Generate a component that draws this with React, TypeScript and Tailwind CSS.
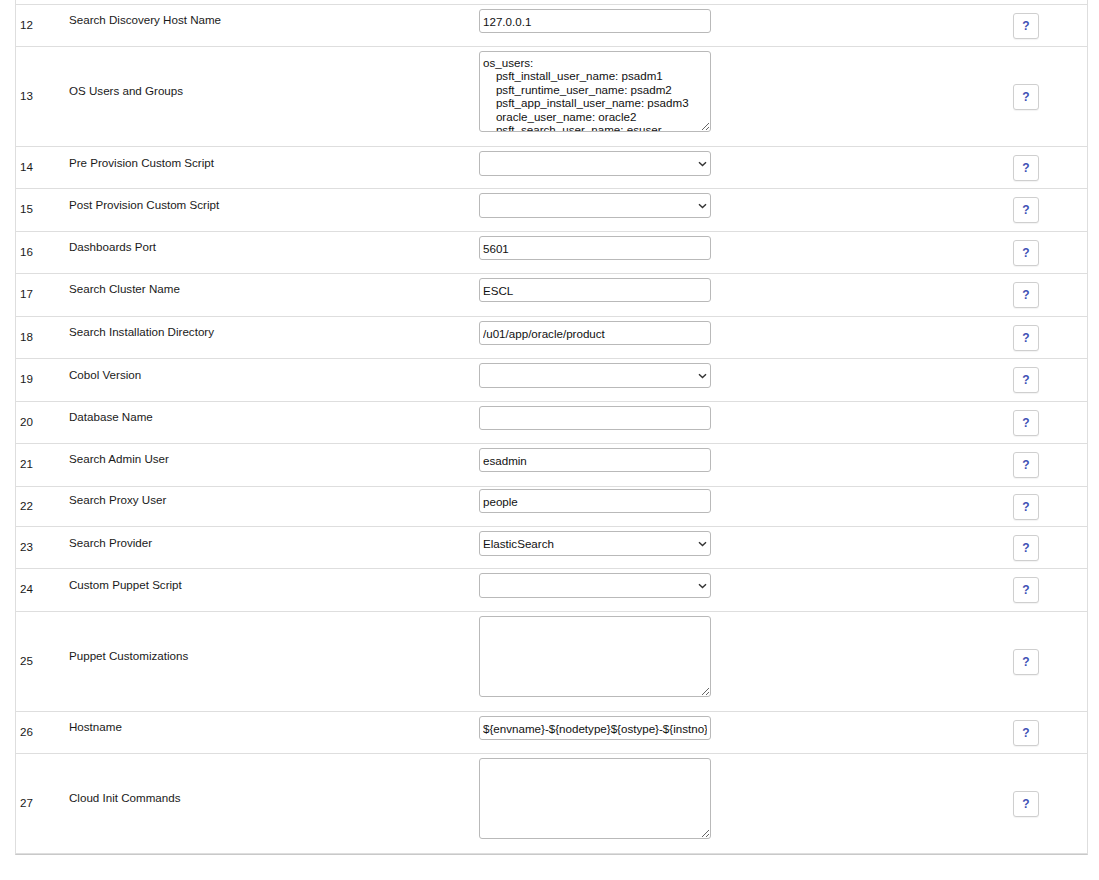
import { ChangeEvent, useState } from 'react';

type Field = {
  no: number;
  label: string;
  kind: 'text' | 'select' | 'area';
  value?: string;
  options?: string[];
  h: number;
  pt?: number;
};

const OS_USERS = `os_users:
    psft_install_user_name: psadm1
    psft_runtime_user_name: psadm2
    psft_app_install_user_name: psadm3
    oracle_user_name: oracle2
    psft_search_user_name: esuser
os_groups:
    psft_common_group_name: oinstall
    psft_runtime_group_name: psft
    psft_app_install_group_name: appinst
    oracle_install_group_name: oinstall2
    oracle_runtime_group_name: dba`;

const FIELDS: Field[] = [
  { no: 12, label: 'Search Discovery Host Name', kind: 'text', value: '127.0.0.1', h: 42 },
  { no: 13, label: 'OS Users and Groups', kind: 'area', value: OS_USERS, h: 100 },
  { no: 14, label: 'Pre Provision Custom Script', kind: 'select', value: '', options: [''], h: 42 },
  { no: 15, label: 'Post Provision Custom Script', kind: 'select', value: '', options: [''], h: 43 },
  { no: 16, label: 'Dashboards Port', kind: 'text', value: '5601', h: 42 },
  { no: 17, label: 'Search Cluster Name', kind: 'text', value: 'ESCL', h: 43 },
  { no: 18, label: 'Search Installation Directory', kind: 'text', value: '/u01/app/oracle/product', h: 42 },
  { no: 19, label: 'Cobol Version', kind: 'select', value: '', options: [''], h: 43 },
  { no: 20, label: 'Database Name', kind: 'text', value: '', h: 42 },
  { no: 21, label: 'Search Admin User', kind: 'text', value: 'esadmin', h: 43 },
  { no: 22, label: 'Search Proxy User', kind: 'text', value: 'people', h: 40, pt: 2 },
  { no: 23, label: 'Search Provider', kind: 'select', value: 'ElasticSearch', options: ['ElasticSearch', 'OpenSearch'], h: 42 },
  { no: 24, label: 'Custom Puppet Script', kind: 'select', value: '', options: [''], h: 43 },
  { no: 25, label: 'Puppet Customizations', kind: 'area', value: '', h: 100 },
  { no: 26, label: 'Hostname', kind: 'text', value: '${envname}-${nodetype}${ostype}-${instno}', h: 42 },
  { no: 27, label: 'Cloud Init Commands', kind: 'area', value: '', h: 100 },
];

const font = "font-['Liberation_Sans','Helvetica','Arial',sans-serif]";

function Chevron() {
  return (
    <svg
      className="pointer-events-none absolute right-[4px] top-1/2 -translate-y-1/2"
      width="9"
      height="6"
      viewBox="0 0 9 6"
      fill="none"
    >
      <path d="M1 1.2 4.5 4.6 8 1.2" stroke="#333" strokeWidth="1.4" />
    </svg>
  );
}

function Control({ field }: { field: Field }) {
  const [val, setVal] = useState(field.value ?? '');
  const onChange = (e: ChangeEvent<HTMLInputElement | HTMLSelectElement | HTMLTextAreaElement>) =>
    setVal(e.target.value);

  if (field.kind === 'area') {
    return (
      <textarea
        value={val}
        onChange={onChange}
        spellCheck={false}
        className="block h-[81px] w-[232px] overflow-hidden whitespace-pre rounded-[3px] border border-[#b9b9b9] bg-white px-[3px] py-[4px] text-[11.6px] leading-[13.4px] text-[#111] outline-none"
      />
    );
  }

  if (field.kind === 'select') {
    return (
      <div className="relative h-[25px] w-[232px]">
        <select
          value={val}
          onChange={onChange}
          className="block h-full w-full appearance-none rounded-[3px] border border-[#b9b9b9] bg-white pl-[3px] pr-[16px] text-[11.6px] text-[#111] outline-none"
        >
          {field.options?.map((o) => (
            <option key={o} value={o}>
              {o}
            </option>
          ))}
        </select>
        <Chevron />
      </div>
    );
  }

  return (
    <input
      value={val}
      onChange={onChange}
      className="block h-[24px] w-[232px] rounded-[3px] border border-[#b9b9b9] bg-white px-[3px] text-[11.6px] text-[#111] outline-none"
    />
  );
}

function Row({ field }: { field: Field }) {
  return (
    <div className="flex border-b border-[#dedede]" style={{ height: field.h }}>
      <div className="flex w-[53px] items-center pb-[2px] pl-[4px] text-[11.6px] text-[#1a1a1a]">
        {field.no}
      </div>
      <div className="flex flex-1 items-start" style={{ paddingTop: field.pt ?? 4 }}>
        <div className="flex items-center">
          <div className="w-[410px] pb-[2px] text-[11.6px] text-[#1a1a1a]">{field.label}</div>
          <Control field={field} />
        </div>
      </div>
      <div className="flex w-[122px] items-center justify-center">
        <button
          type="button"
          title={`Help: ${field.label}`}
          className="flex h-[26px] w-[26px] items-center justify-center rounded-[3px] border border-[#cfcfcf] bg-white text-[12px] font-bold text-[#3f51b5] shadow-[0_1px_1px_rgba(0,0,0,0.05)]"
        >
          ?
        </button>
      </div>
    </div>
  );
}

export default function App() {
  return (
    <div className={`min-h-[880px] bg-white ${font}`}>
      <div className="ml-[15px] w-[1073px] border-x border-b border-x-[#dedede] border-b-[#c9c9c9]">
        <div className="h-[5px] border-b border-[#dedede]" />
        {FIELDS.map((f) => (
          <Row key={f.no} field={f} />
        ))}
      </div>
    </div>
  );
}
